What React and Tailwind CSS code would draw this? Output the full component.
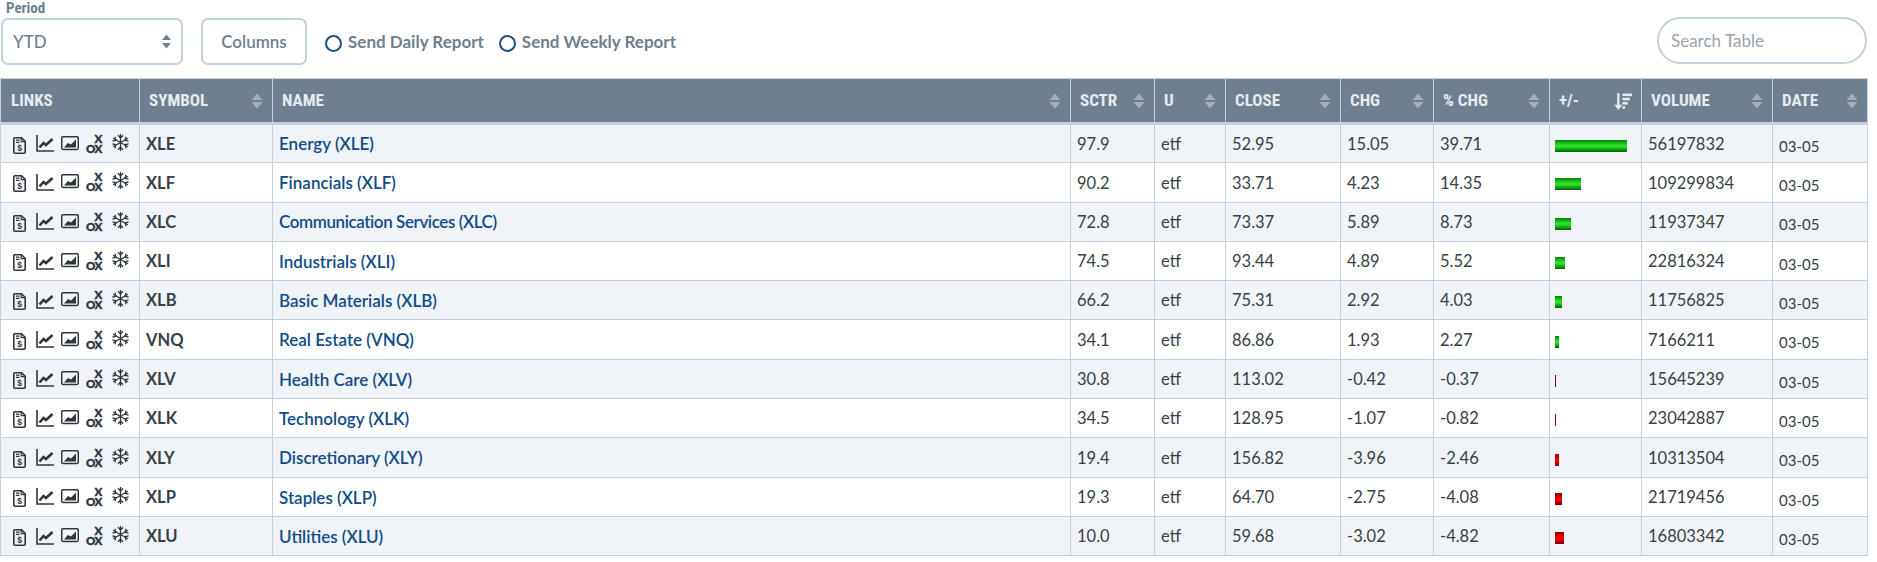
import React from "react";

const rows = [
  ["XLE", "Energy (XLE)", "97.9", "52.95", "15.05", "39.71", "56197832"],
  ["XLF", "Financials (XLF)", "90.2", "33.71", "4.23", "14.35", "109299834"],
  ["XLC", "Communication Services (XLC)", "72.8", "73.37", "5.89", "8.73", "11937347"],
  ["XLI", "Industrials (XLI)", "74.5", "93.44", "4.89", "5.52", "22816324"],
  ["XLB", "Basic Materials (XLB)", "66.2", "75.31", "2.92", "4.03", "11756825"],
  ["VNQ", "Real Estate (VNQ)", "34.1", "86.86", "1.93", "2.27", "7166211"],
  ["XLV", "Health Care (XLV)", "30.8", "113.02", "-0.42", "-0.37", "15645239"],
  ["XLK", "Technology (XLK)", "34.5", "128.95", "-1.07", "-0.82", "23042887"],
  ["XLY", "Discretionary (XLY)", "19.4", "156.82", "-3.96", "-2.46", "10313504"],
  ["XLP", "Staples (XLP)", "19.3", "64.70", "-2.75", "-4.08", "21719456"],
  ["XLU", "Utilities (XLU)", "10.0", "59.68", "-3.02", "-4.82", "16803342"],
];

const headers = [
  ["LINKS", "w-[139px]", false],
  ["SYMBOL", "w-[133px]", true],
  ["NAME", "w-[798px]", true],
  ["SCTR", "w-[84px]", true],
  ["U", "w-[71px]", true],
  ["CLOSE", "w-[115px]", true],
  ["CHG", "w-[93px]", true],
  ["% CHG", "w-[116px]", true],
  ["+/-", "w-[92px]", "active"],
  ["VOLUME", "w-[131px]", true],
  ["DATE", "w-[95px]", true],
];

function SortBoth({ color = "#a3aeb9" }) {
  return (
    <svg width="12" height="16" viewBox="0 0 12 16" className="shrink-0">
      <path d="M6 0.5 L11.5 7 H0.5 Z M0.5 9 H11.5 L6 15.5 Z" fill={color} />
    </svg>
  );
}

function SortActive() {
  return (
    <svg width="18" height="17" viewBox="0 0 17 16" className="shrink-0" fill="#e6ebf0">
      <path d="M3 0 H5.2 V11 H8 L4.1 16 L0.2 11 H3 Z" />
      <rect x="8" y="0.5" width="9" height="2.4" />
      <rect x="8" y="4.5" width="7" height="2.4" />
      <rect x="8" y="8.5" width="5" height="2.4" />
      <rect x="8" y="12.5" width="2.5" height="2.4" />
    </svg>
  );
}

function Links() {
  return (
    <div className="flex items-center pl-[12px] text-[#2f363d]">
      <svg width="13" height="17" viewBox="0 0 13 17" className="mt-[3px]">
        <path d="M1.8 0.8 H8.5 L12.2 4.4 V15 A1.2 1.2 0 0 1 11 16.2 H2 A1.2 1.2 0 0 1 0.8 15 V1.8 A1 1 0 0 1 1.8 0.8 Z" fill="none" stroke="currentColor" strokeWidth="1.6" />
        <path d="M3 3.2 H6.5 M3 5.4 H6.5 M8.2 1 V4.6 H12" stroke="currentColor" strokeWidth="1.2" fill="none" />
        <text x="6.5" y="14" textAnchor="middle" fontSize="8.5" fontWeight="700" fontFamily="Liberation Sans" fill="currentColor">$</text>
      </svg>
      <svg width="18" height="17" viewBox="0 0 18 17" className="ml-[10px]">
        <path d="M1 0 V16 H18" fill="none" stroke="currentColor" strokeWidth="1.6" />
        <path d="M3.5 12.5 L7.5 8 L10 10 L16.5 4" fill="none" stroke="currentColor" strokeWidth="2.6" />
      </svg>
      <svg width="18" height="15" viewBox="0 0 18 15" className="ml-[7px] -mt-[1px]">
        <rect x="0.7" y="0.7" width="16.6" height="12.8" rx="1.6" fill="none" stroke="currentColor" strokeWidth="1.5" />
        <path d="M3 11.5 L7 7 L10 8.5 L15 3.5 V11.5 Z" fill="currentColor" />
      </svg>
      <svg width="18" height="19" viewBox="0 0 18 19" className="ml-[7px] mt-[1px] overflow-visible" fontFamily="Lato" fontWeight="900" fill="currentColor" stroke="currentColor" strokeWidth="0.4">
        <text x="8.6" y="8" fontSize="11.5">X</text>
        <text x="0" y="18.4" fontSize="11.5">O</text>
        <text x="8.6" y="18.4" fontSize="11.5">X</text>
      </svg>
      <svg width="17" height="17" viewBox="0 0 16 16" className="ml-[8px] -mt-[3px]" fill="none" stroke="currentColor" strokeWidth="1.2">
        <path d="M8 0 V16 M1 4 L15 12 M1 12 L15 4" />
        <path d="M5.6 1.2 L8 3.6 L10.4 1.2 M5.6 14.8 L8 12.4 L10.4 14.8 M0.4 6.6 L3.6 5.8 L2.8 2.6 M15.6 9.4 L12.4 10.2 L13.2 13.4 M0.4 9.4 L3.6 10.2 L2.8 13.4 M15.6 6.6 L12.4 5.8 L13.2 2.6" />
      </svg>
    </div>
  );
}

function Bar({ value }) {
  const v = parseFloat(value);
  const width = Math.max(1, Math.round((Math.abs(v) / 39.71) * 72));
  const thin = Math.abs(v) < 1;
  return (
    <div className={"ml-[5px] mt-[4px] h-[12px] " + (v >= 0 ? "bg-[linear-gradient(#008000,#22d022_35%,#33e633_50%,#18b818_70%,#005f00)]" : thin ? "bg-[#8a0000]" : "bg-[linear-gradient(#800000,#f00000_40%,#ff0000_55%,#c80000_75%,#6a0000)]")} style={{ width }} />
  );
}

const td = "p-0 pl-[6px] pt-[1px] border border-[#c1d0dc] text-[16.5px]";

export default function App() {
  return (
    <div className="w-[1877px] h-[562px] bg-white overflow-hidden font-['Lato',sans-serif] text-[#373f47]">
      <div className="w-[1867px] h-[78px] flex items-start">
        <div className="ml-[1px] w-[182px]">
          <div className="pl-[5px] h-[18px] pt-[1px] text-[15px] leading-[15px] font-bold text-[#6f7f90] font-['Roboto',sans-serif] [font-stretch:75%]">Period</div>
          <div className="h-[47px] border-2 border-[#c1d0dc] rounded-[7px] flex items-center justify-between pl-[10px] pr-[10px] text-[17px] text-[#6f7f90] font-medium">
            <span>YTD</span>
            <svg width="9" height="15" viewBox="0 0 9 15"><path d="M4.5 0.5 L9 6 H0 Z M0 9 H9 L4.5 14.5 Z" fill="#6f7f90" /></svg>
          </div>
        </div>
        <div className="ml-[18px] mt-[18px] w-[106px] h-[47px] border-2 border-[#c1d0dc] rounded-[7px] flex items-center justify-center text-[17px] text-[#6f7f90] font-semibold">Columns</div>
        <div className="ml-[18px] mt-[31px] flex items-center">
          <span className="w-[17px] h-[17px] rounded-full border-2 border-[#1b4f85] mt-[4px]" />
          <span className="ml-[6px] text-[17px] leading-[20px] font-bold text-[#6f7f90]">Send Daily Report</span>
          <span className="ml-[15px] w-[17px] h-[17px] rounded-full border-2 border-[#1b4f85] mt-[4px]" />
          <span className="ml-[6px] text-[17px] leading-[20px] font-bold text-[#6f7f90]">Send Weekly Report</span>
        </div>
        <div className="ml-auto mt-[17px] w-[210px] h-[47px] border-2 border-[#c1d0dc] rounded-full flex items-center pl-[12px] text-[17px] text-[#9aa3ac]">Search Table</div>
      </div>
      <table className="w-[1867px] table-fixed border-collapse border border-[#c1d0dc]">
        <thead>
          <tr className="h-[45px] bg-[#6f7f90]">
            {headers.map(([label, w, sort], i) => (
              <th key={label} className={w + " p-0 border-x border-[#c1d0dc] border-b-[3px] border-b-[#c1d0dc] text-left align-middle"}>
                <div className={(i === 0 ? "pl-[10px] " : "pl-[9px] ") + "flex items-center justify-between pr-[9px] pt-[1px] text-[#e6ebf0] text-[17px] font-bold font-['Roboto',sans-serif] [font-stretch:75%]"}>
                  <span>{label}</span>
                  {sort === "active" ? <SortActive /> : sort ? <SortBoth /> : null}
                </div>
              </th>
            ))}
          </tr>
        </thead>
        <tbody>
          {rows.map((r, i) => (
            <tr key={r[0]} className={"h-[39.3px] " + (i % 2 === 0 ? "bg-[#f0f4f8]" : "bg-white")}>
              <td className="p-0 border border-[#c1d0dc]"><Links /></td>
              <td className={td + " font-bold"}>{r[0]}</td>
              <td className={td + " !text-[17px] font-semibold text-[#0f4c8a] " + (r[0] === "XLC" ? "tracking-[-0.41px]" : "")}>{r[1]}</td>
              <td className={td}>{r[2]}</td>
              <td className={td}>etf</td>
              <td className={td}>{r[3]}</td>
              <td className={td}>{r[4]}</td>
              <td className={td}>{r[5]}</td>
              <td className="p-0 border border-[#c1d0dc]"><Bar value={r[5]} /></td>
              <td className={td}>{r[6]}</td>
              <td className="p-0 pl-[6px] border border-[#c1d0dc] text-[15px]"><span className="relative top-[3px]">03-05</span></td>
            </tr>
          ))}
        </tbody>
      </table>
    </div>
  );
}
